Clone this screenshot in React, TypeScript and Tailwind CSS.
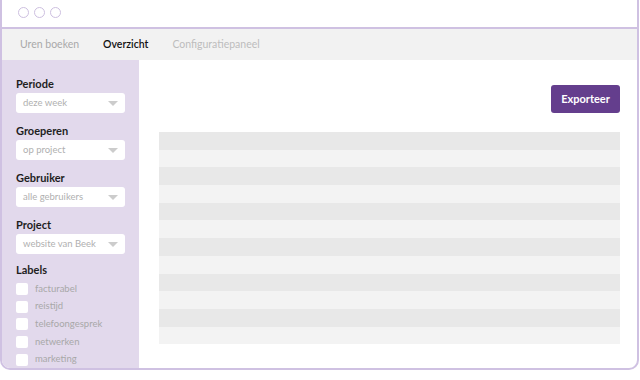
const filters = [
  { label: "Periode", value: "deze week" },
  { label: "Groeperen", value: "op project" },
  { label: "Gebruiker", value: "alle gebruikers" },
  { label: "Project", value: "website van Beek" },
];

const labels = ["facturabel", "reistijd", "telefoongesprek", "netwerken", "marketing"];

function Select({ value }: { value: string }) {
  return (
    <div className="flex h-[20px] w-[109px] items-center justify-between rounded-[3px] bg-white pl-[7px] pr-[7px]">
      <span className="text-[9.5px] text-[#b0b0b0]">{value}</span>
      <span className="h-0 w-0 border-x-[5px] border-t-[5px] border-x-transparent border-t-[#cccccc]" />
    </div>
  );
}

export default function App() {
  return (
    <div className="h-[380px] w-[640px] overflow-hidden bg-white font-['Lato','Open_Sans',sans-serif]">
      <div className="flex h-[370px] w-[639px] flex-col overflow-hidden rounded-b-[10px] border-x-2 border-b-2 border-[#cfc1e2]">
        {/* title bar */}
        <div className="flex h-[29px] shrink-0 items-center gap-[5px] border-b-2 border-[#cfc1e2] pl-[16px] pb-[3px]">
          <span className="h-[11px] w-[11px] rounded-full border border-[#cdbfe0]" />
          <span className="h-[11px] w-[11px] rounded-full border border-[#cdbfe0]" />
          <span className="h-[11px] w-[11px] rounded-full border border-[#cdbfe0]" />
        </div>

        {/* nav */}
        <div className="flex h-[31px] shrink-0 items-center gap-[24px] bg-[#f2f2f2] pl-[18px] text-[10.5px]">
          <span className="text-[#a9a9a9]">Uren boeken</span>
          <span className="font-semibold text-[#111111]">Overzicht</span>
          <span className="text-[#bdbdbd]">Configuratiepaneel</span>
        </div>

        <div className="flex flex-1">
          {/* sidebar */}
          <div className="w-[137px] shrink-0 bg-[#e2d9ec] pl-[14px] pt-[17px]">
            {filters.map((f) => (
              <div key={f.label} className="mb-[11px]">
                <div className="mb-[2px] text-[11px] leading-[14px] font-bold text-[#1e1e1e]">{f.label}</div>
                <Select value={f.value} />
              </div>
            ))}
            <div className="-mt-[2px] text-[11px] leading-[14px] font-bold text-[#1e1e1e]">Labels</div>
            <div className="mt-[3px] flex flex-col">
              {labels.map((l) => (
                <div key={l} className="flex h-[17.7px] items-center gap-[7px]">
                  <span className="h-[12px] w-[12px] rounded-[2px] bg-white" />
                  <span className="text-[9.5px] text-[#a8a8a8]">{l}</span>
                </div>
              ))}
            </div>
          </div>

          {/* main */}
          <div className="flex flex-1 flex-col pl-[20px] pr-[17px] pt-[25px]">
            <div className="flex justify-end">
              <button className="h-[28px] w-[69px] rounded-[3px] bg-[#643e8d] text-[11px] font-bold text-white">
                Exporteer
              </button>
            </div>
            <div className="mt-[19px] flex flex-col">
              {Array.from({ length: 12 }).map((_, i) => (
                <div key={i} className={i % 2 === 0 ? "h-[17.7px] bg-[#e8e8e8]" : "h-[17.7px] bg-[#f3f3f3]"} />
              ))}
            </div>
          </div>
        </div>
      </div>
    </div>
  );
}
